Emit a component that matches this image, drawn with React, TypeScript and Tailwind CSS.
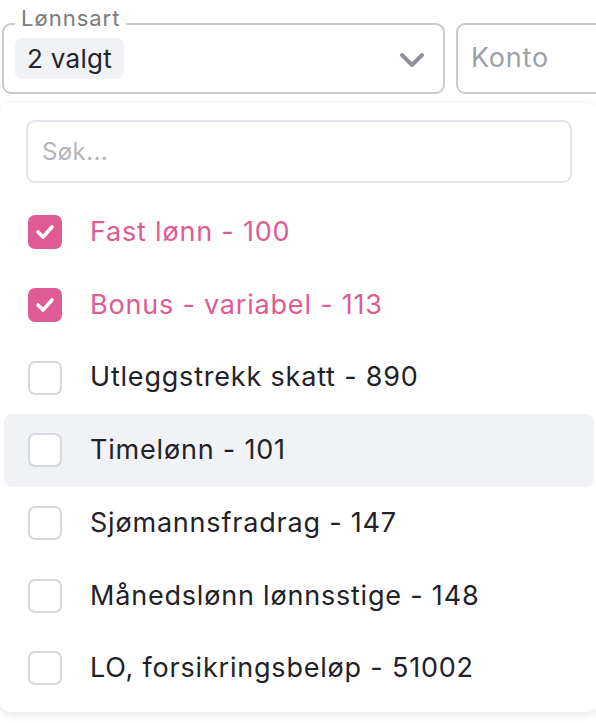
import React from "react";

const items = [
  { label: "Fast lønn - 100", checked: true },
  { label: "Bonus - variabel - 113", checked: true },
  { label: "Utleggstrekk skatt - 890", checked: false },
  { label: "Timelønn - 101", checked: false, hover: true },
  { label: "Sjømannsfradrag - 147", checked: false },
  { label: "Månedslønn lønnsstige - 148", checked: false },
  { label: "LO, forsikringsbeløp - 51002", checked: false },
];

export default function App() {
  return (
    <div
      className="w-[596px] h-[723px] bg-white overflow-hidden relative"
      style={{ fontFamily: "Inter, 'Noto Sans', sans-serif" }}
    >
      <div className="flex gap-[11px] pt-[23px] pl-[2px]">
        <div className="relative shrink-0 w-[443px] h-[71px] border-2 border-[#c9ccd1] rounded-[9px] flex items-center pl-[11px] pr-[18px]">
          <span className="absolute -top-[21px] left-[11px] bg-white px-[6px] text-[22px] tracking-[1px] leading-[28px] text-[#7a7c80]">
            Lønnsart
          </span>
          <span className="bg-[#f1f2f5] rounded-[7px] px-[12px] h-[41px] flex items-center text-[26px] tracking-[0.3px] text-[#22252b]">
            2 valgt
          </span>
          <div className="flex-1" />
          <svg width="26" height="16" viewBox="0 0 26 16" className="mt-[2px]">
            <path d="M3 3 L13 13 L23 3" stroke="#8e9298" strokeWidth="4" fill="none" strokeLinecap="round" strokeLinejoin="round" />
          </svg>
        </div>
        <div className="shrink-0 w-[200px] h-[71px] border-2 border-[#c9ccd1] rounded-[9px] flex items-center pl-[13px] text-[27px] tracking-[0.8px] text-[#9ea1a6]">
          Konto
        </div>
      </div>
      <div className="absolute left-0 top-[103px] w-[598px] h-[609px] bg-white rounded-[10px] shadow-[0_2px_10px_rgba(0,0,0,0.12)] px-[4px]">
        <div className="pt-[17px] px-[22px]">
          <div className="h-[63px] border-2 border-[#e0e3e7] rounded-[9px] flex items-center pl-[14px] text-[24px] tracking-[0.4px] text-[#b3b6bb]">
            Søk...
          </div>
        </div>
        <div className="mt-[13px] flex flex-col">
          {items.map((it) => (
            <div
              key={it.label}
              className={
                "h-[72.7px] flex items-center pl-[24px] rounded-[8px] " +
                (it.hover ? "bg-[#f1f2f6]" : "")
              }
            >
              {it.checked ? (
                <div className="w-[34px] h-[34px] rounded-[7px] bg-[#df5b93] flex items-center justify-center">
                  <svg width="20" height="16" viewBox="0 0 20 16">
                    <path d="M3 8 L8 13 L17 3" stroke="white" strokeWidth="3.6" fill="none" strokeLinecap="round" strokeLinejoin="round" />
                  </svg>
                </div>
              ) : (
                <div className="w-[34px] h-[34px] rounded-[7px] border-2 border-[#d5d8dc] bg-white" />
              )}
              <span
                className={
                  "ml-[28px] text-[27px] tracking-[0.8px] " +
                  (it.checked ? "text-[#df5b93]" : "text-[#1f2228]")
                }
              >
                {it.label}
              </span>
            </div>
          ))}
        </div>
      </div>
    </div>
  );
}
